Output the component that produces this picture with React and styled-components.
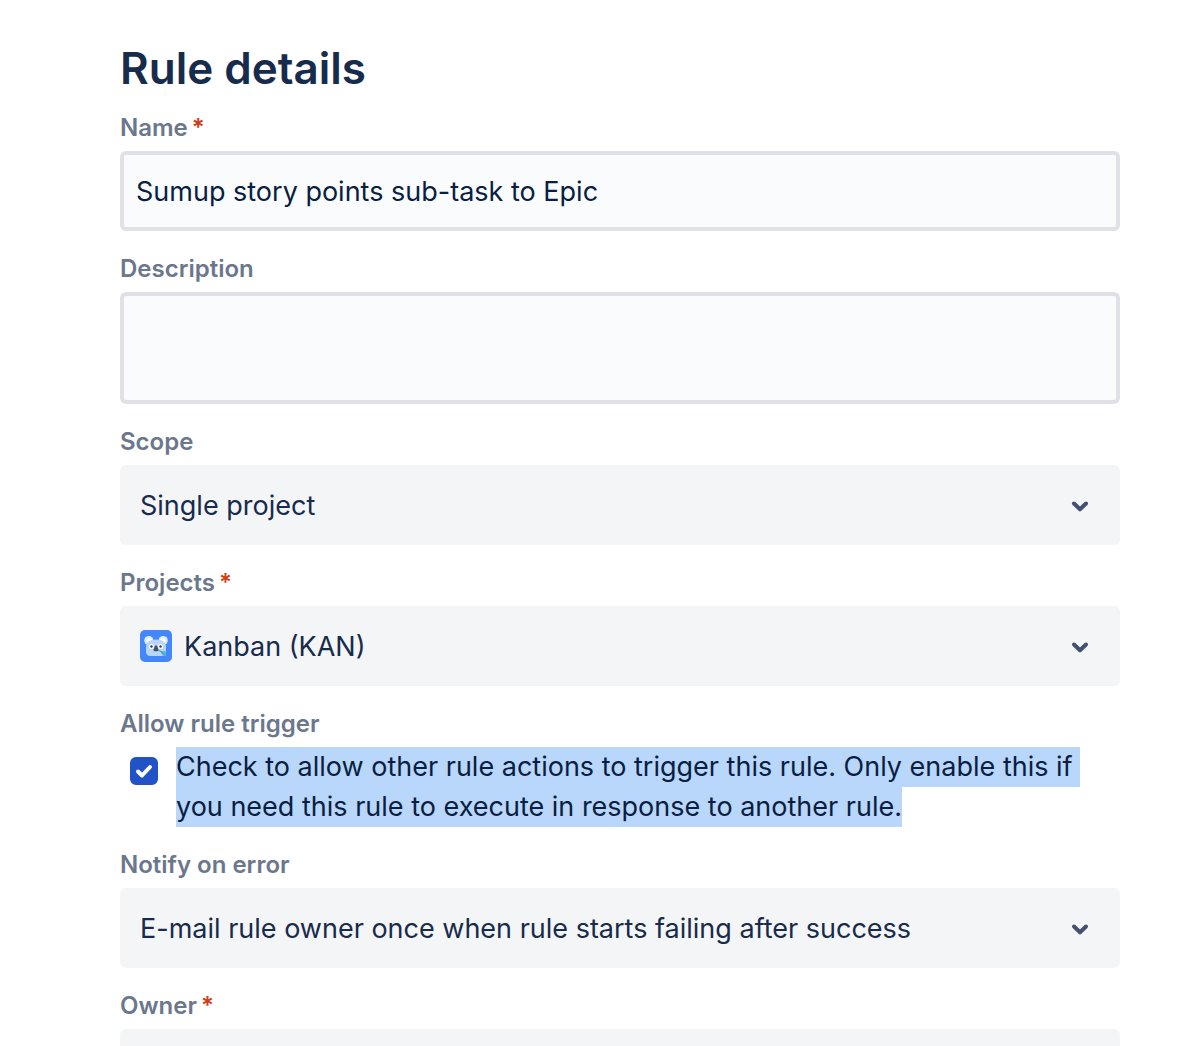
import React from "react"
import styled, { createGlobalStyle } from "styled-components"


const GlobalStyle = createGlobalStyle`
    *, *::before, *::after {
        box-sizing: border-box;
    }

    body {
        margin: 0;
        background: #ffffff;
        color: #172b4d;
        font-family: Inter, sans-serif;
    }
`;

const Page = styled.main`
    padding: 40px 82px 40px 120px;
`;

const Title = styled.h1`
    margin: 0 0 16px;
    font-size: 44px;
    line-height: 56px;
    font-weight: 600;
`;

const Form = styled.form`
    display: flex;
    flex-direction: column;
    gap: 22px;
`;

const FieldBox = styled.div`
    display: flex;
    flex-direction: column;
    gap: 7px;
`;

const Label = styled.label`
    color: #6b778c;
    font-size: 24px;
    line-height: 32px;
    font-weight: 600;
`;

const Required = styled.span`
    margin-left: 4px;
    color: #cd3f1a;
`;

const TextInput = styled.input`
    width: 100%;
    height: 80px;
    padding: 0 12px;
    border: 4px solid #dfe1e6;
    border-radius: 6px;
    background: #fafbfc;
    color: #091e42;
    font: inherit;
    font-size: 27px;
`;

const TextArea = styled.textarea`
    display: block;
    width: 100%;
    height: 112px;
    padding: 12px;
    border: 4px solid #dfe1e6;
    border-radius: 6px;
    background: #fafbfc;
    color: #091e42;
    font: inherit;
    font-size: 27px;
    resize: none;
`;

const SelectBox = styled.div`
    position: relative;
`;

const Select = styled.select`
    display: block;
    width: 100%;
    height: 80px;
    padding: 0 80px 0 ${props => (props.$hasIcon ? "64px" : "20px")};
    border: 0;
    border-radius: 6px;
    appearance: none;
    background: #f4f5f7;
    color: #172b4d;
    font: inherit;
    font-size: 27px;
`;

const Chevron = styled.svg`
    position: absolute;
    top: 32px;
    right: 32px;
    width: 16px;
    height: 16px;
    overflow: visible;
    pointer-events: none;
`;

const Avatar = styled.svg`
    position: absolute;
    top: 24px;
    left: 20px;
    width: 32px;
    height: 32px;
    pointer-events: none;
`;

const CheckRow = styled.div`
    display: flex;
    gap: 18px;
    padding-left: 10px;
`;

const CheckBox = styled.div`
    position: relative;
    flex: none;
    width: 28px;
    height: 28px;
    margin-top: 10px;
`;

const CheckInput = styled.input`
    display: block;
    width: 28px;
    height: 28px;
    margin: 0;
    border: 4px solid #dfe1e6;
    border-radius: 6px;
    appearance: none;
    background: #fafbfc;

    &:checked {
        border-color: #2152c8;
        background: #2152c8;
    }

    &:checked + svg {
        visibility: visible;
    }
`;

const Tick = styled.svg`
    position: absolute;
    inset: 0;
    visibility: hidden;
    pointer-events: none;
`;

const CheckLabel = styled.label`
    font-size: 27px;
    line-height: 40px;
    white-space: pre-wrap;
`;

const Highlight = styled.span`
    padding: 3px 0 4px;
    background: #b9d6fb;
    color: #091e42;
`;

function Field({ id, label, required, children }) {
    return (
        <FieldBox>
            <Label htmlFor={id}>
                {label}
                {required && <Required>*</Required>}
            </Label>
            {children}
        </FieldBox>
    )
}

function SelectField({ id, label, required, value, icon }) {
    return (
        <Field id={id} label={label} required={required}>
            <SelectBox>
                <Select id={id} $hasIcon={Boolean(icon)}>
                    {value && <option>{value}</option>}
                </Select>
                {icon}
                <Chevron viewBox="0 0 16 16" aria-hidden="true">
                    <path d="M2 6.500l6 5.800 6-5.800" fill="none" stroke="#42526e" strokeWidth="4" strokeLinecap="round" strokeLinejoin="round" />
                </Chevron>
            </SelectBox>
        </Field>
    )
}

function Koala() {
    return (
        <Avatar viewBox="0 0 32 32" aria-hidden="true">
            <rect width="32" height="32" rx="5" fill="#4387fb" />
            <circle cx="8.800" cy="10.500" r="4.600" fill="#deebff" />
            <circle cx="23.200" cy="10.500" r="4.600" fill="#deebff" />
            <circle cx="9.500" cy="11" r="2.800" fill="#ffffff" />
            <circle cx="22.500" cy="11" r="2.800" fill="#ffffff" />
            <path d="M6 17c0-4.500 3.500-7.500 10-7.500S26 12.500 26 17v5c0 2.500-2 4-4.500 4h-11C8 26 6 24.500 6 22z" fill="#b9d4fd" />
            <circle cx="11.500" cy="16.500" r="2.500" fill="#ffffff" />
            <circle cx="20.500" cy="16.500" r="2.500" fill="#ffffff" />
            <circle cx="11.500" cy="16.500" r="1.200" fill="#253858" />
            <circle cx="20.500" cy="16.500" r="1.200" fill="#253858" />
            <path d="M14.500 17c0-1 .5-1.500 1.500-1.500s1.500.5 1.500 1.500l1 2.500c.4 1.300-.7 1.800-2.500 1.800s-2.900-.5-2.500-1.800z" fill="#42526e" />
            <path d="M19.500 20l3 1.300 3.200-.3.300 5.300-3.500-1.300-1.500-2.500z" fill="#57b9c8" />
            <path d="M18.500 20l6 4.500" stroke="#36a3b5" strokeWidth="1" />
        </Avatar>
    )
}

export default function App() {
    return (
        <Page>
            <GlobalStyle />
            <Title>Rule details</Title>
            <Form>
                <Field id="name" label="Name" required>
                    <TextInput id="name" type="text" defaultValue="Sumup story points sub-task to Epic" />
                </Field>
                <Field id="description" label="Description">
                    <TextArea id="description" />
                </Field>
                <SelectField id="scope" label="Scope" value="Single project" />
                <SelectField id="projects" label="Projects" required value="Kanban (KAN)" icon={<Koala />} />
                <Field id="trigger" label="Allow rule trigger">
                    <CheckRow>
                        <CheckBox>
                            <CheckInput id="trigger" type="checkbox" defaultChecked />
                            <Tick viewBox="0 0 28 28" aria-hidden="true">
                                <path d="M8 14.500l4 4 8-8.500" fill="none" stroke="#ffffff" strokeWidth="4" strokeLinecap="round" strokeLinejoin="round" />
                            </Tick>
                        </CheckBox>
                        <CheckLabel htmlFor="trigger">
                            <Highlight>Check to allow other rule actions to trigger this rule. Only enable this if you need this rule to execute in response to another rule.</Highlight>
                        </CheckLabel>
                    </CheckRow>
                </Field>
                <SelectField id="notify" label="Notify on error" value="E-mail rule owner once when rule starts failing after success" />
                <SelectField id="owner" label="Owner" required />
            </Form>
        </Page>
    )
}
